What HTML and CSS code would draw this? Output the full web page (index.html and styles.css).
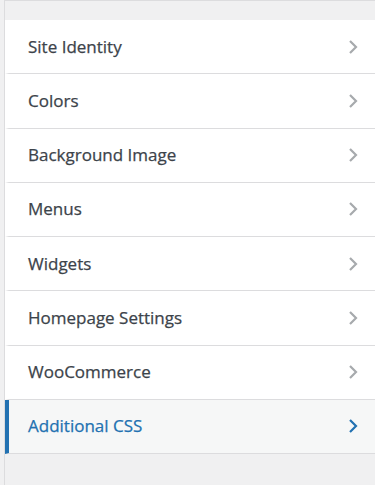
FILE: index.html
```html
<!DOCTYPE html>
<html lang="en">
<head>
  <meta charset="UTF-8" />
  <title>Customizer</title>
  <link rel="stylesheet" href="styles.css">
</head>
<body>
  <div class="panel">
    <div class="panel-top"></div>
    <ul class="sections">
      <li class="section">
        <span class="section-title">Site Identity</span>
        <svg class="chev" viewBox="0 0 10 16"><path d="M2 2l6 6-6 6" /></svg>
      </li>
      <li class="section">
        <span class="section-title">Colors</span>
        <svg class="chev" viewBox="0 0 10 16"><path d="M2 2l6 6-6 6" /></svg>
      </li>
      <li class="section">
        <span class="section-title">Background Image</span>
        <svg class="chev" viewBox="0 0 10 16"><path d="M2 2l6 6-6 6" /></svg>
      </li>
      <li class="section">
        <span class="section-title">Menus</span>
        <svg class="chev" viewBox="0 0 10 16"><path d="M2 2l6 6-6 6" /></svg>
      </li>
      <li class="section">
        <span class="section-title">Widgets</span>
        <svg class="chev" viewBox="0 0 10 16"><path d="M2 2l6 6-6 6" /></svg>
      </li>
      <li class="section">
        <span class="section-title">Homepage Settings</span>
        <svg class="chev" viewBox="0 0 10 16"><path d="M2 2l6 6-6 6" /></svg>
      </li>
      <li class="section">
        <span class="section-title">WooCommerce</span>
        <svg class="chev" viewBox="0 0 10 16"><path d="M2 2l6 6-6 6" /></svg>
      </li>
      <li class="section active">
        <span class="section-title">Additional CSS</span>
        <svg class="chev" viewBox="0 0 10 16"><path d="M2 2l6 6-6 6" /></svg>
      </li>
    </ul>
  </div>
</body>
</html>
```

FILE: styles.css
```css
body {
  margin: 0;
  background: #f0f0f1;
  font-family: "Open Sans", "Noto Sans", sans-serif;
  height: 485px;
  overflow: hidden;
}
.panel {
  margin-left: 4px;
  border-left: 1px solid #dcdcde;
  border-top: 1px solid #dcdcde;
  min-height: 484px;
  background: #f0f0f1;
}
.panel-top {
  height: 19px;
}
.sections {
  list-style: none;
  margin: 0;
  padding: 0;
}
.section {
  box-sizing: border-box;
  height: 54.25px;
  display: flex;
  align-items: center;
  justify-content: space-between;
  padding: 0 17px 0 19px;
  background: #fff;
  border-bottom: 1px solid #dcdcde;
  border-left: 4px solid #fff;
}
.section-title {
  font-size: 17px;
  color: #3c434a;
  padding-bottom: 1px;
  -webkit-text-stroke: 0.25px currentColor;
}
.chev {
  width: 10px;
  height: 16px;
  fill: none;
  stroke: #a7aaad;
  stroke-width: 2.2;
}
/* open section */
.section.active {
  background: #f6f7f7;
  border-left-color: #2271b1;
}
.section.active .section-title {
  color: #2271b1;
}
.section.active .chev {
  stroke: #2271b1;
}
```
